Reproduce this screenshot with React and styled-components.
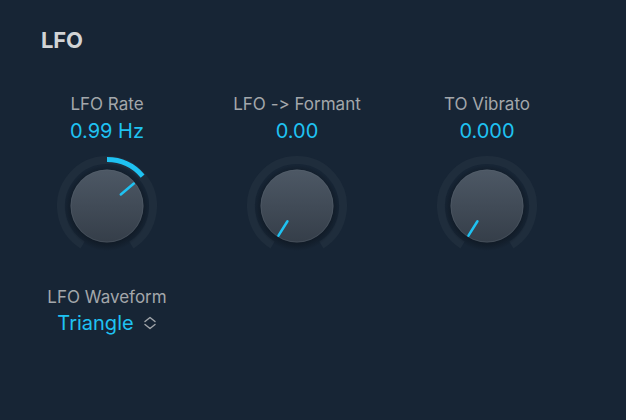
import React from 'react';
import styled, { createGlobalStyle } from 'styled-components';

const GlobalStyle = createGlobalStyle`
  html, body {
    margin: 0;
    padding: 0;
    background: #172535;
  }
  body {
    font-family: Inter, "Noto Sans", "Liberation Sans", sans-serif;
    font-feature-settings: "calt" 0, "liga" 0;
    -webkit-font-smoothing: antialiased;
  }
`;

const knobs = [
  { id: 1, label: 'LFO Rate', value: '0.99 Hz', angle: 50, arcFrom: 0 },
  { id: 2, label: 'LFO -> Formant', value: '0.00', angle: -148 },
  { id: 3, label: 'TO Vibrato', value: '0.000', angle: -148 },
];

const MIN = -148;
const MAX = 148;

const Panel = styled.div`
  width: 626px;
  height: 420px;
  box-sizing: border-box;
  padding: 26px 0 0 12px;
  background: #172535;
  overflow: hidden;
`;

const Title = styled.h1`
  margin: 0 0 0 29px;
  font-size: 22px;
  line-height: 28px;
  font-weight: 700;
  color: #d2d4d6;
  letter-spacing: -0.2px;
`;

const KnobRow = styled.div`
  display: grid;
  grid-template-columns: repeat(3, 190px);
  margin-top: 40px;
`;

const Column = styled.div`
  display: flex;
  flex-direction: column;
  align-items: center;
`;

const Label = styled.div`
  font-size: 17px;
  line-height: 20px;
  color: #a3a7ab;
  white-space: nowrap;
  font-feature-settings: "calt" 0;
`;

const Value = styled.div`
  margin-top: 5px;
  font-size: 20px;
  line-height: 24px;
  color: #1fc2f2;
  white-space: nowrap;
`;

const KnobSvg = styled.svg`
  display: block;
  margin-top: 11px;
  overflow: visible;
`;

const WaveBlock = styled.div`
  width: 190px;
  margin-top: 29px;
  display: flex;
  flex-direction: column;
  align-items: center;
`;

const Popup = styled.div`
  margin-top: 4px;
  display: flex;
  align-items: center;
  gap: 9px;
  color: #1fc2f2;
  font-size: 20px;
  line-height: 24px;
`;

const polar = (cx, cy, r, deg) => {
  const a = ((deg - 90) * Math.PI) / 180;
  return [cx + r * Math.cos(a), cy + r * Math.sin(a)];
};

const arcPath = (cx, cy, r, from, to) => {
  const [x1, y1] = polar(cx, cy, r, from);
  const [x2, y2] = polar(cx, cy, r, to);
  const large = to - from > 180 ? 1 : 0;
  return `M ${x1} ${y1} A ${r} ${r} 0 ${large} 1 ${x2} ${y2}`;
};

const Knob = ({ angle, arcFrom, id }) => {
  const c = 52;
  const [px1, py1] = polar(c, c, 18, angle);
  const [px2, py2] = polar(c, c, 35, angle);
  return (
    <KnobSvg width="104" height="104" viewBox="0 0 104 104">
      <defs>
        <linearGradient id={`body${id}`} x1="0" y1="0" x2="0" y2="1">
          <stop offset="0" stopColor="#4d5865" />
          <stop offset="1" stopColor="#353e49" />
        </linearGradient>
        <radialGradient id={`shadow${id}`} cx="0.5" cy="0.5" r="0.5">
          <stop offset="0.78" stopColor="#0c141d" stopOpacity="0.7" />
          <stop offset="1" stopColor="#0c141d" stopOpacity="0" />
        </radialGradient>
      </defs>
      <path d={arcPath(c, c, 46, MIN, MAX)} fill="none" stroke="#1f2d3c" strokeWidth="8" />
      {arcFrom !== undefined && (
        <path d={arcPath(c, c, 46.5, arcFrom, angle)} fill="none" stroke="#1fc2f2" strokeWidth="5" />
      )}
      <circle cx={c} cy={c + 2} r="43" fill={`url(#shadow${id})`} />
      <circle cx={c} cy={c} r="36.5" fill={`url(#body${id})`} />
      <circle cx={c} cy={c} r="36" fill="none" stroke="#5b6672" strokeOpacity="0.35" strokeWidth="1" />
      <line x1={px1} y1={py1} x2={px2} y2={py2} stroke="#1fc2f2" strokeWidth="2.5" strokeLinecap="round" />
    </KnobSvg>
  );
};

const UpDown = () => (
  <svg width="14" height="14" viewBox="0 0 14 14" fill="none" stroke="#a3a7ab" strokeWidth="1.4" strokeLinecap="round" strokeLinejoin="round">
    <path d="M2 5.5 L7 1.5 L12 5.5" />
    <path d="M2 8.5 L7 12.5 L12 8.5" />
  </svg>
);

const App = () => (
  <>
    <GlobalStyle />
    <Panel>
      <Title>LFO</Title>
      <KnobRow>
        {knobs.map((k) => (
          <Column key={k.id}>
            <Label>{k.label}</Label>
            <Value>{k.value}</Value>
            <Knob id={k.id} angle={k.angle} arcFrom={k.arcFrom} />
          </Column>
        ))}
      </KnobRow>
      <WaveBlock>
        <Label>LFO Waveform</Label>
        <Popup>
          Triangle
          <UpDown />
        </Popup>
      </WaveBlock>
    </Panel>
  </>
);

export default App;
